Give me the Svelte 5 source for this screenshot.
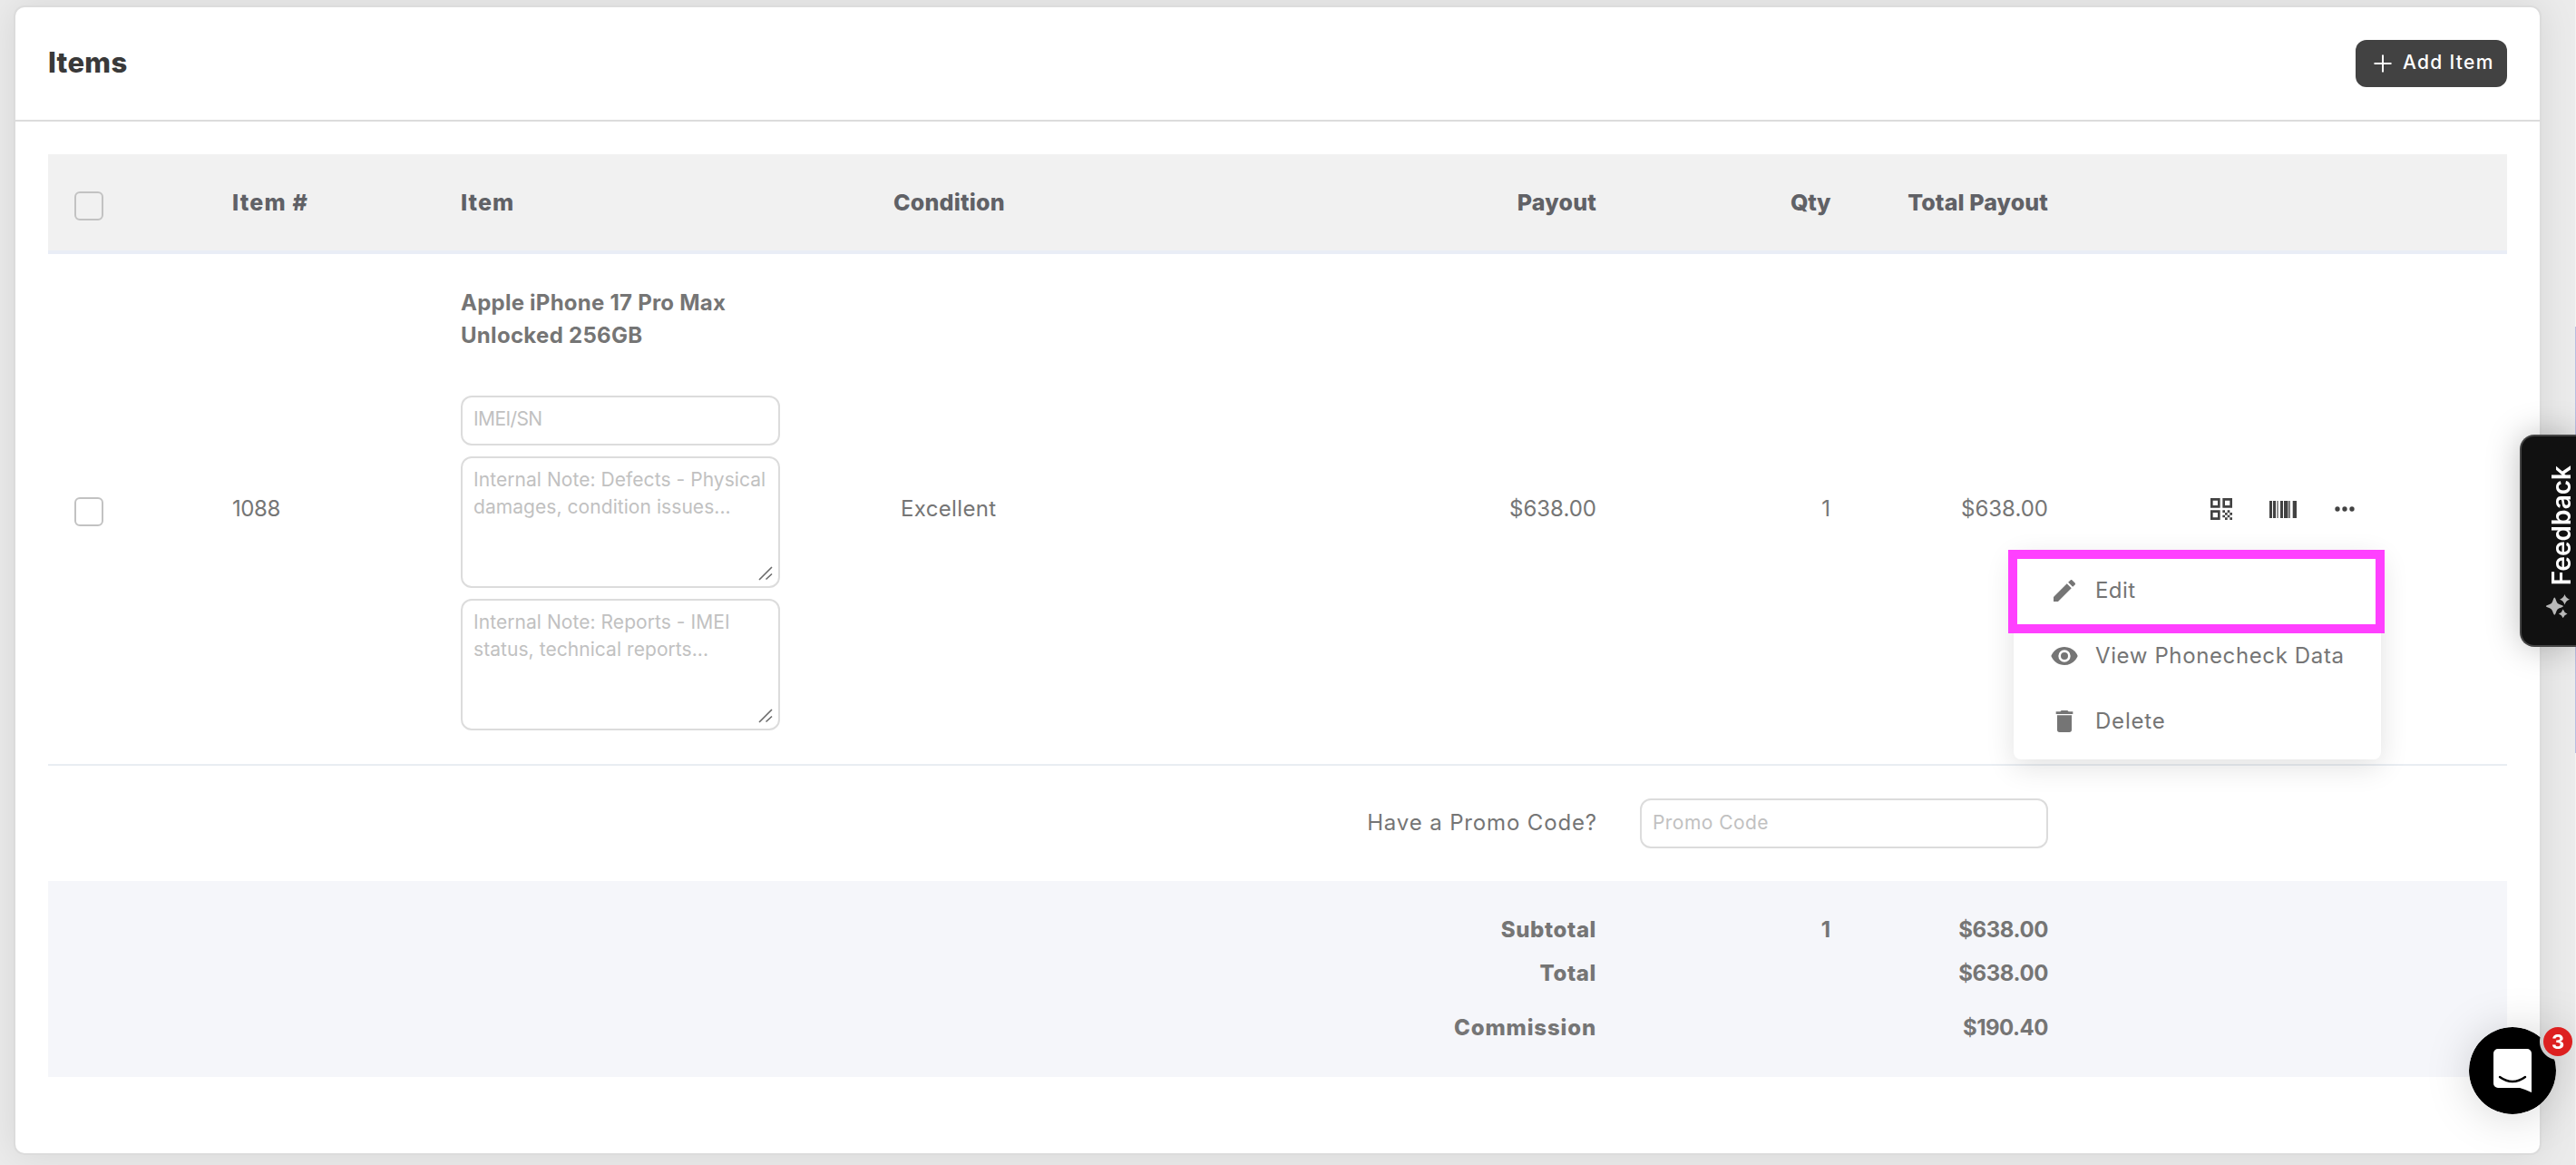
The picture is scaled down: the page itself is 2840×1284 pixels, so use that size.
<script>
  const columns = [
    { key: "number", label: "Item #" },
    { key: "item", label: "Item" },
    { key: "condition", label: "Condition" },
    { key: "payout", label: "Payout" },
    { key: "qty", label: "Qty" },
    { key: "total", label: "Total Payout" },
  ];

  const summary = [
    { key: "subtotal", label: "Subtotal", qty: "1", amount: "$638.00" },
    { key: "grand", label: "Total", qty: "", amount: "$638.00" },
    { key: "commission", label: "Commission", qty: "", amount: "$190.40" },
  ];

  const icons = {
    pencil:
      "M20.71,7.04C21.1,6.65 21.1,6 20.71,5.63L18.37,3.29C18,2.9 17.35,2.9 16.96,3.29L15.12,5.12L18.87,8.87M17.81,9.93L14.06,6.18L3,17.25V21H6.75L17.81,9.93Z",
    eye: "M12,9A3,3 0 0,0 9,12A3,3 0 0,0 12,15A3,3 0 0,0 15,12A3,3 0 0,0 12,9M12,17A5,5 0 0,1 7,12A5,5 0 0,1 12,7A5,5 0 0,1 17,12A5,5 0 0,1 12,17M12,4.5C7,4.5 2.73,7.61 1,12C2.73,16.39 7,19.5 12,19.5C17,19.5 21.27,16.39 23,12C21.27,7.61 17,4.5 12,4.5Z",
    trash:
      "M19,4H15.5L14.5,3H9.5L8.5,4H5V6H19M6,19A2,2 0 0,0 8,21H16A2,2 0 0,0 18,19V7H6V19Z",
    qr: "M3 11h8V3H3v8zm2-6h4v4H5V5zM3 21h8v-8H3v8zm2-6h4v4H5v-4zM13 3v8h8V3h-8zm6 6h-4V5h4v4zM19 19h2v2h-2zM13 13h2v2h-2zM15 15h2v2h-2zM13 17h2v2h-2zM15 19h2v2h-2zM17 17h2v2h-2zM17 13h2v2h-2zM19 15h2v2h-2z",
    dots: "M16,12A2,2 0 0,1 18,10A2,2 0 0,1 20,12A2,2 0 0,1 18,14A2,2 0 0,1 16,12M10,12A2,2 0 0,1 12,10A2,2 0 0,1 14,12A2,2 0 0,1 12,14A2,2 0 0,1 10,12M4,12A2,2 0 0,1 6,10A2,2 0 0,1 8,12A2,2 0 0,1 6,14A2,2 0 0,1 4,12Z",
  };

  const menu = [
    { key: "edit", icon: "pencil", label: "Edit" },
    { key: "view", icon: "eye", label: "View Phonecheck Data" },
    { key: "delete", icon: "trash", label: "Delete" },
  ];

  const notes = [
    "Internal Note: Defects - Physical damages, condition issues...",
    "Internal Note: Reports - IMEI status, technical reports...",
  ];
</script>

<div class="page">
  <section class="card">
    <header class="card-header">
      <h2>Items</h2>
      <button class="add">
        <svg viewBox="0 0 20 20" width="20" height="20">
          <path d="M10 .5v19M.5 10h19" stroke="#fff" stroke-width="2" />
        </svg>
        <span>Add Item</span>
      </button>
    </header>

    <div class="card-body">
      <div class="row head">
        <div class="cell check"><span class="checkbox"></span></div>
        {#each columns as col (col.key)}
          <div class="cell {col.key}"><span>{col.label}</span></div>
        {/each}
        <div class="cell"></div>
      </div>

      <div class="row line">
        <div class="cell check"><span class="checkbox"></span></div>
        <div class="cell number"><span>1088</span></div>
        <div class="cell item">
          <p class="name">
            <span class="name-first">Apple iPhone 17 Pro Max</span>
            <span class="name-second">Unlocked 256GB</span>
          </p>
          <input class="imei" placeholder="IMEI/SN" />
          {#each notes as note}
            <div class="note">
              <textarea placeholder={note}></textarea>
              <svg class="grip" viewBox="0 0 16 16" width="16" height="16">
                <path d="M1 15L15 1M8.5 14.5L15 8.5" />
              </svg>
            </div>
          {/each}
        </div>
        <div class="cell condition"><span>Excellent</span></div>
        <div class="cell payout"><span>$638.00</span></div>
        <div class="cell qty"><span>1</span></div>
        <div class="cell total"><span>$638.00</span></div>
        <div class="cell actions">
          <svg class="icon" viewBox="0 0 24 24"><path d={icons.qr} /></svg>
          <svg class="barcode" viewBox="0 0 30 19" width="30" height="19">
            <path d="M0 0h3v19H0zM4 0h3v19H4zM12 0h3v19h-3zM16 0h4.5v19H16zM25.7 0H30v19h-4.3z" />
            <path class="thin" d="M8.2 0h1.6v19H8.2zM21 0h2v19h-2z" />
          </svg>
          <svg class="icon" viewBox="0 0 24 24"><path d={icons.dots} /></svg>

          <div class="menu">
            {#each menu as entry (entry.key)}
              <div class="menu-item">
                <svg class="icon" viewBox="0 0 24 24"><path d={icons[entry.icon]} /></svg>
                <span class="label-{entry.key}">{entry.label}</span>
              </div>
            {/each}
            <div class="highlight"></div>
          </div>
        </div>
      </div>

      <div class="row promo">
        <div class="promo-label"><span>Have a Promo Code?</span></div>
        <input class="promo-input" placeholder="Promo Code" />
      </div>

      <div class="summary">
        {#each summary as s (s.key)}
          <div class="row sum {s.key}">
            <div class="sum-label"><span>{s.label}</span></div>
            <div class="sum-qty">{s.qty}</div>
            <div class="sum-amount"><span>{s.amount}</span></div>
          </div>
        {/each}
      </div>
    </div>
  </section>

  <div class="edge"></div>

  <div class="feedback">
    <span>Feedback</span>
    <svg viewBox="0 0 26 26" width="26" height="26">
      <path d="M9.3 3.600Q10 3.600 11.500 8Q12.300 10.300 14.600 11.100Q19 12.600 19 13.200Q19 13.800 14.600 15.300Q12.300 16.100 11.500 18.400Q10 22.800 9.300 22.800Q8.600 22.800 7.100 18.400Q6.300 16.100 4 15.300Q-.3 13.800 -.3 13.200Q-.3 12.600 4 11.100Q6.300 10.300 7.100 8Q8.600 3.600 9.300 3.600Z" />
      <path d="M20.500 0Q21.800 4.400 26 5.700Q21.800 7 20.500 11.400Q19.200 7 15 5.700Q19.200 4.400 20.500 0Z" />
      <path d="M18.700 16.500Q19.900 20.200 23.500 21.400Q19.900 22.600 18.700 26.300Q17.500 22.600 13.900 21.400Q17.500 20.200 18.700 16.500Z" />
    </svg>
  </div>

  <div class="chat">
    <div class="bubble">
      <svg viewBox="0 0 42 48" width="42" height="48">
        <path d="M5 0H37A5 5 0 0 1 42 5V48Q36 45 29 43H5A5 5 0 0 1 0 38V5A5 5 0 0 1 5 0Z" fill="#fff" />
        <path d="M7 31Q21 41 35 31" fill="none" stroke="#000" stroke-width="2.400" stroke-linecap="round" />
      </svg>
    </div>
    <div class="badge">3</div>
  </div>
</div>

<style>
  :global(body) {
    background: #ebebeb;
  }

  .page {
    position: relative;
    box-sizing: border-box;
    width: 2840px;
    height: 1284px;
    padding: 6px 38px 11px 15px;
    overflow: hidden;
    background: #ebebeb;
    color: #757575;
    font-family: Inter, sans-serif;
    font-size: 24px;
    line-height: 36px;
  }

  .card {
    box-sizing: border-box;
    height: 1267px;
    border: 2px solid #dcdcdc;
    border-radius: 12px;
    background: #fff;
    box-shadow: 0 0 40px rgba(0, 0, 0, 0.09);
  }

  .card-header {
    display: flex;
    align-items: center;
    justify-content: space-between;
    height: 124px;
    padding: 0 36px;
    border-bottom: 2px solid #dcdcdc;
  }

  h2 {
    margin: 0 0 2px;
    color: #393939;
    font-size: 31px;
    font-weight: 800;
    letter-spacing: 0.3px;
  }

  .add {
    display: flex;
    align-items: center;
    gap: 12px;
    box-sizing: border-box;
    width: 167px;
    height: 52px;
    padding: 0 0 0 20px;
    border: 0;
    border-radius: 12px;
    background: #424242;
    color: #fff;
    font: 500 21px Inter, sans-serif;
    letter-spacing: 1.3px;
    white-space: nowrap;
  }

  .add svg {
    flex: none;
  }

  .add span {
    margin-bottom: 3px;
  }

  .card-body {
    padding: 36px;
  }

  .row {
    display: grid;
    grid-template-columns: 203px 252px 477px 400px 375px 258px 240px 506px;
  }

  .cell {
    display: flex;
    align-items: center;
    white-space: nowrap;
  }

  .check {
    padding: 7px 0 0 29px;
  }

  .line .check {
    padding-top: 6px;
  }

  .checkbox {
    box-sizing: border-box;
    width: 32px;
    height: 32px;
    border: 2px solid #c2c2c2;
    border-radius: 6px;
  }

  .payout,
  .qty,
  .total {
    justify-content: flex-end;
  }

  .head {
    height: 106px;
    border-bottom: 4px solid #e9edf6;
    background: #f1f1f1;
    color: #606166;
    font-size: 25px;
    font-weight: 800;
  }

  .head .number {
    letter-spacing: 1.2px;
  }

  .head .item {
    letter-spacing: 1.1px;
  }

  .head .condition {
    letter-spacing: 0.2px;
  }

  .head .payout {
    letter-spacing: 0.2px;
  }

  .head .qty {
    letter-spacing: -0.4px;
  }

  .head .total {
    letter-spacing: 0.12px;
  }

  .line {
    height: 562px;
    border-bottom: 2px solid #e9edf2;
  }

  .line .cell > span:not(.checkbox) {
    margin-bottom: 1px;
  }

  .line .number {
    letter-spacing: -0.4px;
  }

  .line .condition {
    padding-left: 8px;
    letter-spacing: 0.35px;
  }

  .line .item {
    flex-direction: column;
    align-items: flex-start;
    justify-content: flex-start;
    gap: 12px;
    padding-top: 36px;
  }

  .name {
    display: flex;
    flex-direction: column;
    margin: 0 0 36px;
    font-weight: 700;
  }

  .name-first {
    letter-spacing: 0.24px;
  }

  .name-second {
    letter-spacing: 0.3px;
  }

  input,
  textarea {
    display: block;
    box-sizing: border-box;
    width: 352px;
    margin: 0;
    padding: 9px 10px 7px 12px;
    border: 2px solid #dcdcdc;
    border-radius: 12px;
    outline: none;
    background: #fff;
    font: 21px/30px Inter, sans-serif;
    letter-spacing: 0.06px;
    resize: none;
  }

  input::placeholder,
  textarea::placeholder {
    color: #c1c1c1;
    opacity: 1;
  }

  .imei {
    height: 55px;
    padding-top: 7px;
    padding-bottom: 11px;
    letter-spacing: -0.6px;
  }

  .note {
    position: relative;
  }

  textarea {
    height: 145px;
    overflow: hidden;
  }

  .grip {
    position: absolute;
    right: 8px;
    bottom: 8px;
    fill: none;
    stroke: #6a6a6a;
    stroke-width: 1.6;
  }

  .actions {
    position: relative;
    padding-left: 175px;
  }

  .icon {
    flex: none;
    width: 32px;
    height: 32px;
    fill: #424242;
  }

  .barcode {
    margin: 0 36.5px 0 37px;
    fill: #424242;
  }

  .thin {
    opacity: 0.7;
  }

  .menu {
    position: absolute;
    top: 328px;
    left: -38px;
    box-sizing: border-box;
    width: 405px;
    height: 229px;
    padding: 7px 40px;
    border-radius: 8px;
    background: #fff;
    box-shadow: 0 8px 32px rgba(0, 0, 0, 0.12);
  }

  .menu-item {
    display: flex;
    align-items: center;
    gap: 17px;
    height: 72px;
  }

  .menu-item .icon {
    fill: #757575;
  }

  .menu-item span {
    margin-bottom: 1px;
  }

  .label-edit {
    padding-left: 1px;
    letter-spacing: 0.4px;
  }

  .label-view {
    padding-left: 1px;
    letter-spacing: 0.62px;
  }

  .label-delete {
    padding-left: 1px;
    letter-spacing: 0.8px;
  }

  .highlight {
    position: absolute;
    top: -2px;
    left: -6px;
    width: 395px;
    height: 72px;
    border: 10px solid #ff40ff;
  }

  .promo {
    grid-template-columns: 1707px 48px 450px;
    align-items: center;
    height: 127px;
  }

  .promo-label {
    margin-right: -1px;
    padding-bottom: 1px;
    text-align: right;
    letter-spacing: 0.86px;
  }

  .promo-input {
    grid-column: 3;
    width: 450px;
    height: 55px;
    padding-top: 8px;
    padding-bottom: 11px;
    letter-spacing: 0.45px;
  }

  .summary {
    box-sizing: border-box;
    height: 216px;
    padding-top: 30px;
    background: #f5f6fa;
    font-weight: 700;
    line-height: 48px;
  }

  .sum {
    grid-template-columns: 1707px 258px 240px;
    text-align: right;
  }

  .sum-label {
    font-weight: 800;
    letter-spacing: 0.6px;
  }

  .sum-amount {
    letter-spacing: -0.4px;
  }

  .commission {
    margin-top: 12px;
  }

  .commission .sum-label {
    letter-spacing: 0.85px;
  }

  .commission .sum-amount {
    letter-spacing: -0.5px;
  }

  .edge {
    position: absolute;
    top: 0;
    right: 0;
    width: 1px;
    height: 1284px;
    background: linear-gradient(#f4f4f4 360px, #b9bcdf 360px, #b9bcdf 830px, #f4f4f4 830px);
  }

  .feedback {
    position: absolute;
    top: 479px;
    right: 0;
    display: flex;
    flex-direction: column;
    align-items: flex-start;
    gap: 10px;
    box-sizing: border-box;
    width: 62px;
    height: 234px;
    padding: 32px 0 0 27px;
    border: 2px solid #444;
    border-right: 0;
    border-radius: 16px 0 0 16px;
    background: #111;
    color: #fff;
    font-size: 28px;
    font-weight: 600;
    line-height: 28px;
    box-shadow: 0 0 36px rgba(0, 0, 0, 0.25);
  }

  .feedback span {
    margin-left: 3px;
    writing-mode: vertical-rl;
    transform: rotate(180deg);
  }

  .feedback svg {
    fill: #b8b8b8;
  }

  .chat {
    position: absolute;
    top: 1132px;
    right: 22px;
    filter: drop-shadow(0 2px 24px rgba(0, 0, 0, 0.16));
  }

  .bubble {
    display: flex;
    justify-content: center;
    box-sizing: border-box;
    width: 96px;
    height: 96px;
    padding: 24px 0 0;
    border-radius: 50%;
    background: #000;
    mask: radial-gradient(circle at 98px 16px, transparent 19.5px, #000 20.5px);
  }

  .badge {
    position: absolute;
    top: 0;
    right: -18px;
    width: 32px;
    height: 32px;
    border-radius: 50%;
    background: #dd2020;
    color: #fff;
    font-size: 22px;
    font-weight: 700;
    line-height: 33px;
    text-align: center;
  }
</style>
